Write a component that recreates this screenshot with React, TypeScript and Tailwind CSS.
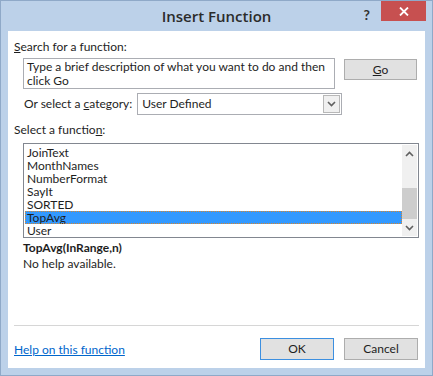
const font = { fontFamily: 'Lato, "Noto Sans", sans-serif' };

const functions = ["JoinText", "MonthNames", "NumberFormat", "SayIt", "SORTED", "TopAvg", "User"];

function Chevron({ down = false }: { down?: boolean }) {
  return (
    <svg width="9" height="6" viewBox="0 0 9 6" className={down ? "rotate-180" : ""}>
      <path d="M1 5 L4.5 1.5 L8 5" fill="none" stroke="#606060" strokeWidth="1.6" />
    </svg>
  );
}

export default function App() {
  return (
    <div
      className="w-[433px] h-[376px] bg-[#bcd1e9] border border-[#8fa9c8] flex flex-col text-[12px] text-[#1e1e1e]"
      style={font}
    >
      {/* title bar */}
      <div className="relative h-[30px] flex items-center justify-center">
        <span
          className="text-[15px] text-[#2b2b2b] font-semibold mt-[1px]"
          style={{ fontFamily: '"Open Sans", "Noto Sans", sans-serif' }}
        >
          Insert Function
        </span>
        <span className="absolute right-[62px] top-[3px] text-[14px] font-bold text-[#333]">?</span>
        <div className="absolute right-[6px] top-0 w-[45px] h-[20px] bg-[#c75050] flex items-center justify-center">
          <svg width="10" height="9" viewBox="0 0 10 9">
            <path d="M1 0.5 L9 8.5 M9 0.5 L1 8.5" stroke="#fff" strokeWidth="1.8" />
          </svg>
        </div>
      </div>

      {/* client area */}
      <div className="mx-[7px] h-[337px] bg-white flex flex-col px-[6px]">
        <div className="mt-[9px] leading-[14px]">
          <span className="underline">S</span>earch for a function:
        </div>

        <div className="mt-[4px] flex items-start">
          <div className="ml-[9px] w-[312px] h-[31px] border border-[#abadb3] px-[3px] leading-[14px] pt-[1px]">
            Type a brief description of what you want to do and then click Go
          </div>
          <button className="ml-[9px] mt-[1px] w-[73px] h-[21px] bg-[#e1e1e1] border border-[#adadad] leading-none">
            <span className="underline">G</span>o
          </button>
        </div>

        <div className="mt-[4px] flex items-center h-[22px]">
          <span className="ml-[10px]">
            Or select a <span className="underline">c</span>ategory:
          </span>
          <div className="ml-[5px] w-[205px] h-[22px] border border-[#abadb3] flex items-center">
            <span className="pl-[4px] flex-1">User Defined</span>
            <div className="w-[17px] h-[18px] mr-[1px] border border-[#b8b8b8] bg-[#f0f0f0] flex items-center justify-center">
              <Chevron down />
            </div>
          </div>
        </div>

        <div className="mt-[8px] leading-[14px]">
          Select a functio<span className="underline">n</span>:
        </div>

        <div className="mt-[6px] ml-[9px] w-[396px] h-[95px] border border-[#828790] flex">
          <div className="flex-1 pt-[2px] pl-[1px]">
            {functions.map((f) => (
              <div
                key={f}
                className={`h-[13px] leading-[13px] pl-[2px] overflow-hidden ${
                  f === "TopAvg"
                    ? "bg-[#3399ff] text-[#1e1e1e] outline-1 outline-dotted outline-[#d8862e] -outline-offset-1"
                    : ""
                }`}
              >
                {f}
              </div>
            ))}
          </div>
          <div className="w-[15px] my-[1px] mr-[1px] bg-[#f0f0f0] flex flex-col">
            <div className="h-[17px] flex items-center justify-center">
              <Chevron />
            </div>
            <div className="mt-[26px] h-[31px] bg-[#cdcdcd]" />
            <div className="flex-1" />
            <div className="h-[17px] flex items-center justify-center">
              <Chevron down />
            </div>
          </div>
        </div>

        <div className="mt-[3px] ml-[9px] font-bold leading-[14px]">TopAvg(InRange,n)</div>
        <div className="mt-[2px] ml-[9px] leading-[14px]">No help available.</div>

        <div className="mt-[54px] h-px bg-[#d6d6d6]" />

        <div className="mt-[12px] flex items-center">
          <a className="text-[#0066cc] underline leading-[14px] mt-[1px]">Help on this function</a>
          <div className="flex-1" />
          <button className="w-[74px] h-[22px] bg-[#e1e1e1] border border-[#3c8fe0] leading-none">OK</button>
          <button className="ml-[10px] w-[74px] h-[22px] bg-[#e1e1e1] border border-[#adadad] leading-none">
            Cancel
          </button>
          <div className="w-[1px]" />
        </div>
      </div>
    </div>
  );
}
